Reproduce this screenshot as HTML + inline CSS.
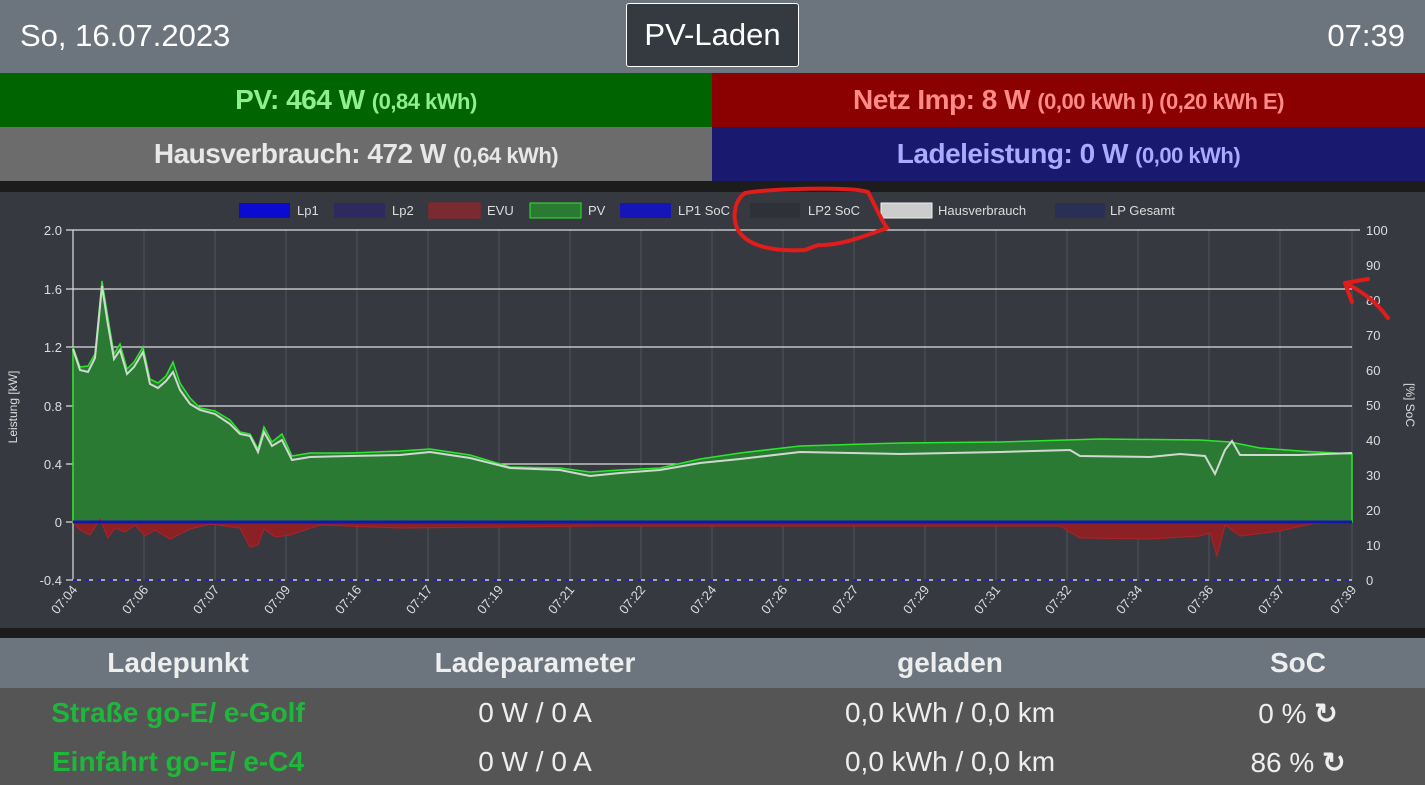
<!DOCTYPE html>
<html><head><meta charset="utf-8"><style>
*{margin:0;padding:0;box-sizing:border-box}
body{width:1425px;height:785px;overflow:hidden;background:#1e1e1e;font-family:"Liberation Sans",sans-serif}
.hdr{position:absolute;left:0;top:0;width:1425px;height:73px;background:#6c757d;color:#fff;font-size:31px}
.date{position:absolute;left:20px;top:18px}
.time{position:absolute;right:20px;top:18px}
.btn{position:absolute;left:626px;top:3px;width:173px;height:64px;background:#343a40;border:1px solid #fff;border-radius:3px;text-align:center;line-height:62px;font-size:31px}
.box{position:absolute;height:54px;line-height:54px;text-align:center;font-weight:bold;font-size:28px;letter-spacing:-0.5px}
.box small{font-size:22px}
.th{position:absolute;top:638px;height:50px;line-height:50px;width:1425px;background:#6c757d}
.rows{position:absolute;top:688px;height:97px;width:1425px;background:#555}
.c{position:absolute;transform:translateX(-50%);white-space:nowrap}
.th .c{font-weight:bold;font-size:28px;color:#eee}
.rows .c{font-size:28px;color:#eee}
.rows .c.g{color:#1db83a;font-weight:bold}
</style></head><body>
<div class="hdr"><div class="date">So, 16.07.2023</div><div class="btn">PV-Laden</div><div class="time">07:39</div></div>
<div class="box" style="left:0;top:73px;width:712px;background:#006400;color:#90ee90">PV: 464 W <small>(0,84 kWh)</small></div>
<div class="box" style="left:712px;top:73px;width:713px;background:#8b0000;color:#ff8a8a">Netz Imp: 8 W <small>(0,00 kWh I) (0,20 kWh E)</small></div>
<div class="box" style="left:0;top:127px;width:712px;background:#6c6c6c;color:#e8e8e8">Hausverbrauch: 472 W <small>(0,64 kWh)</small></div>
<div class="box" style="left:712px;top:127px;width:713px;background:#191970;color:#aaaaff">Ladeleistung: 0 W <small>(0,00 kWh)</small></div>
<svg style="position:absolute;left:0;top:181px" width="1425" height="457" viewBox="0 181 1425 457" font-family="Liberation Sans, sans-serif">
<rect x="0" y="181" width="1425" height="457" fill="#1c1c1c"/>
<rect x="0" y="192" width="1425" height="436" fill="#363a40"/>
<g stroke="#4d535b" stroke-width="1">
<line x1="144" y1="230" x2="144" y2="580"/><line x1="215" y1="230" x2="215" y2="580"/><line x1="286" y1="230" x2="286" y2="580"/><line x1="357" y1="230" x2="357" y2="580"/><line x1="428" y1="230" x2="428" y2="580"/><line x1="499" y1="230" x2="499" y2="580"/><line x1="570" y1="230" x2="570" y2="580"/><line x1="641" y1="230" x2="641" y2="580"/><line x1="712" y1="230" x2="712" y2="580"/><line x1="783" y1="230" x2="783" y2="580"/><line x1="854" y1="230" x2="854" y2="580"/><line x1="925" y1="230" x2="925" y2="580"/><line x1="996" y1="230" x2="996" y2="580"/><line x1="1067" y1="230" x2="1067" y2="580"/><line x1="1138" y1="230" x2="1138" y2="580"/><line x1="1209" y1="230" x2="1209" y2="580"/><line x1="1280" y1="230" x2="1280" y2="580"/><line x1="1352" y1="230" x2="1352" y2="580"/>
</g>
<g stroke="#ddd" stroke-width="1.2">
<line x1="66" y1="230" x2="1360" y2="230"/><line x1="66" y1="289" x2="1352" y2="289"/><line x1="66" y1="347" x2="1352" y2="347"/><line x1="66" y1="406" x2="1352" y2="406"/><line x1="66" y1="464" x2="1352" y2="464"/><line x1="66" y1="522" x2="73" y2="522"/><line x1="66" y1="580" x2="73" y2="580"/>
<line x1="73" y1="230" x2="73" y2="580"/>
</g>
<line x1="73" y1="580" x2="1352" y2="580" stroke="#aaa" stroke-dasharray="8 4" stroke-width="2"/>
<line x1="73" y1="580" x2="1352" y2="580" stroke="#2020c0" stroke-dasharray="4 8" stroke-width="2"/>
<path d="M73,347 L80,367 88,366 95,354 102,281 108,318 114,354 120,344 127,369 134,362 143,347 150,379 158,383 166,376 173,362 180,383 190,398 200,408 215,411 230,420 240,432 250,434 258,449 264,427 272,442 282,434 292,456 310,453 350,453 400,451 430,449 470,455 510,467 560,468 590,472 620,470 660,468 700,459 740,453 800,446 900,443 1000,442 1100,439 1200,440 1230,442 1260,448 1300,451 1352,454 L1352,522 73,522Z" fill="#2a7a33" stroke="#2ee52e" stroke-width="1.5"/>
<path d="M73,349 L80,370 88,372 95,358 102,286 108,325 114,359 120,350 127,374 134,367 143,352 150,384 158,388 166,381 173,372 180,390 190,404 200,410 215,414 230,424 240,434 250,436 258,452 264,432 272,446 282,440 292,460 310,457 350,456 400,455 430,452 470,458 510,468 560,470 590,476 620,473 660,470 700,463 740,459 800,452 900,454 1000,452 1070,450 1080,456 1150,457 1180,454 1205,456 1215,474 1225,450 1232,441 1240,455 1300,455 1352,453" fill="none" stroke="#d0d8d0" stroke-width="2"/>
<path d="M73,522 L80,530 90,535 100,519 108,538 115,528 125,532 135,525 145,536 155,530 170,539 190,529 210,524 240,528 250,547 258,545 264,529 275,537 290,535 320,525 400,528 500,527 600,526 700,526 800,526 900,526 1000,526 1060,526 1080,538 1150,539 1200,536 1210,533 1217,556 1225,525 1240,536 1280,531 1310,524 1352,522Z" fill="#8b2025" stroke="#b02028" stroke-width="1"/>
<line x1="73" y1="522" x2="1352" y2="522" stroke="#1515b0" stroke-width="3"/>
<g fill="#ddd" font-size="13" text-anchor="end">
<text x="62" y="235">2.0</text><text x="62" y="294">1.6</text><text x="62" y="352">1.2</text><text x="62" y="411">0.8</text><text x="62" y="469">0.4</text><text x="62" y="527">0</text><text x="62" y="585">-0.4</text>
</g>
<g fill="#ddd" font-size="13">
<text x="1366" y="235">100</text><text x="1366" y="270">90</text><text x="1366" y="305">80</text><text x="1366" y="340">70</text><text x="1366" y="375">60</text><text x="1366" y="410">50</text><text x="1366" y="445">40</text><text x="1366" y="480">30</text><text x="1366" y="515">20</text><text x="1366" y="550">10</text><text x="1366" y="585">0</text>
<text transform="translate(17,407) rotate(-90)" font-size="12" text-anchor="middle">Leistung [kW]</text>
<text transform="translate(1406,405) rotate(90)" font-size="12" text-anchor="middle">[%] SoC</text>
</g>
<g fill="#ddd" font-size="13" text-anchor="end">
<text transform="translate(78,590) rotate(-50)">07:04</text><text transform="translate(149,590) rotate(-50)">07:06</text><text transform="translate(220,590) rotate(-50)">07:07</text><text transform="translate(291,590) rotate(-50)">07:09</text><text transform="translate(362,590) rotate(-50)">07:16</text><text transform="translate(433,590) rotate(-50)">07:17</text><text transform="translate(504,590) rotate(-50)">07:19</text><text transform="translate(575,590) rotate(-50)">07:21</text><text transform="translate(646,590) rotate(-50)">07:22</text><text transform="translate(717,590) rotate(-50)">07:24</text><text transform="translate(788,590) rotate(-50)">07:26</text><text transform="translate(859,590) rotate(-50)">07:27</text><text transform="translate(930,590) rotate(-50)">07:29</text><text transform="translate(1001,590) rotate(-50)">07:31</text><text transform="translate(1072,590) rotate(-50)">07:32</text><text transform="translate(1143,590) rotate(-50)">07:34</text><text transform="translate(1214,590) rotate(-50)">07:36</text><text transform="translate(1285,590) rotate(-50)">07:37</text><text transform="translate(1357,590) rotate(-50)">07:39</text>
</g>
<g font-size="13" fill="#ddd">
<rect x="239" y="203" width="51" height="15" fill="#0a0ad0"/><text x="297" y="215">Lp1</text>
<rect x="334" y="203" width="51" height="15" fill="#2e2a60"/><text x="392" y="215">Lp2</text>
<rect x="429" y="203" width="51" height="15" fill="#7a2a30" stroke="#a02020"/><text x="487" y="215">EVU</text>
<rect x="530" y="203" width="51" height="15" fill="#2a7a33" stroke="#2ee52e"/><text x="588" y="215">PV</text>
<rect x="620" y="203" width="51" height="15" fill="#1515b8"/><text x="678" y="215">LP1 SoC</text>
<rect x="750" y="203" width="50" height="15" fill="#2e3238"/><text x="808" y="215">LP2 SoC</text>
<rect x="881" y="203" width="51" height="15" fill="#ccc" stroke="#eee"/><text x="938" y="215">Hausverbrauch</text>
<rect x="1055" y="203" width="50" height="15" fill="#2a2f55"/><text x="1110" y="215">LP Gesamt</text>
</g>
<path d="M745,193 C765,189 850,186 868,192 C875,205 880,218 887,228 C865,236 840,246 818,245 L805,250 C770,252 745,245 737,228 C732,215 735,200 745,193Z" fill="none" stroke="#e21b1b" stroke-width="4"/>
<path d="M1388,318 C1375,300 1360,290 1345,283 M1345,283 L1368,279 M1345,283 L1352,302" fill="none" stroke="#e21b1b" stroke-width="4" stroke-linecap="round"/>
</svg>
<div class="th"><div class="c" style="left:178px">Ladepunkt</div><div class="c" style="left:535px">Ladeparameter</div><div class="c" style="left:950px">geladen</div><div class="c" style="left:1298px">SoC</div></div>
<div class="rows">
<div class="c g" style="left:178px;top:9px">Straße go-E/ e-Golf</div><div class="c" style="left:535px;top:9px">0 W / 0 A</div><div class="c" style="left:950px;top:9px">0,0 kWh / 0,0 km</div><div class="c" style="left:1298px;top:9px">0 % <b>&#8635;</b></div>
<div class="c g" style="left:178px;top:58px">Einfahrt go-E/ e-C4</div><div class="c" style="left:535px;top:58px">0 W / 0 A</div><div class="c" style="left:950px;top:58px">0,0 kWh / 0,0 km</div><div class="c" style="left:1298px;top:58px">86 % <b>&#8635;</b></div>
</div>
</body></html>
